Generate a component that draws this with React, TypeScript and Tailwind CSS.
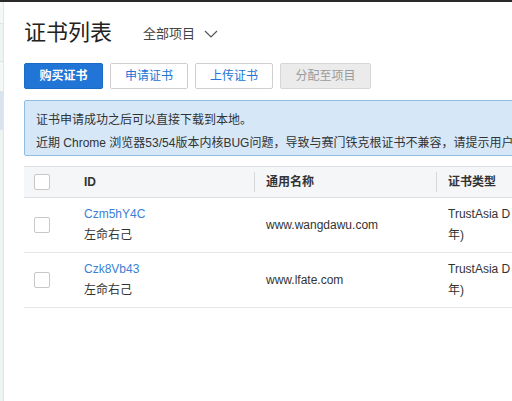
const rows = [
  { id: "Czm5hY4C", owner: "左命右己", domain: "www.wangdawu.com", type: "TrustAsia DV SSL CA - G5（1年)" },
  { id: "Czk8Vb43", owner: "左命右己", domain: "www.lfate.com", type: "TrustAsia DV SSL CA - G5（1年)" },
];

const Checkbox = () => (
  <div className="h-[16px] w-[16px] rounded-[2px] border border-[#c8c8c8] bg-white" />
);

const App = () => {
  return (
    <div
      className="relative h-[401px] w-[512px] overflow-hidden bg-white text-[12px] text-[#333]"
      style={{ fontFamily: '"Liberation Sans", "Noto Sans CJK SC", sans-serif' }}
    >
      <div className="h-[2px] w-full bg-[#2a2a2a]" />
      <div className="flex h-[399px]">
        <div className="flex w-[4px] shrink-0 flex-col border-r border-[#dfe6e6] bg-[#eef4f4]">
          <div className="h-[22px] border-b border-[#dde4e4] bg-[#f4f8f8]" />
          <div className="h-[38px] border-b border-[#dde4e4]" />
          <div className="h-[30px] border-b border-[#dde4e4] bg-[#f4f8f8]" />
          <div className="h-[38px] bg-[#d9e4ef]" />
          <div className="flex-1" />
        </div>
        <div className="min-w-0 flex-1 pl-[20px]">
          <div className="flex h-[61px] items-center">
            <h1 className="text-[22px] leading-none text-[#222]">证书列表</h1>
            <div className="ml-[31px] mt-[2px] flex items-center text-[13px] text-[#444]">
              全部项目
              <svg className="ml-[9px]" width="14" height="8" viewBox="0 0 14 8" fill="none">
                <path d="M1 1l6 6 6-6" stroke="#555" strokeWidth="1.2" />
              </svg>
            </div>
          </div>
          <div className="flex gap-[7px]">
            <button className="h-[26px] w-[79px] rounded-[2px] border border-[#1b6bc9] bg-[#2075d6] text-[12px] font-bold text-white">
              购买证书
            </button>
            <button className="h-[26px] w-[78px] rounded-[2px] border border-[#cfcfcf] bg-white text-[12px] text-[#2075d6]">
              申请证书
            </button>
            <button className="h-[26px] w-[78px] rounded-[2px] border border-[#cfcfcf] bg-white text-[12px] text-[#2075d6]">
              上传证书
            </button>
            <button className="h-[26px] w-[91px] rounded-[2px] border border-[#d6d6d6] bg-[#ebebeb] text-[12px] text-[#9a9a9a]">
              分配至项目
            </button>
          </div>
          <div className="mt-[11px] h-[56px] w-[600px] rounded-l-[2px] border border-[#8fbde8] bg-[#d6e8f8] px-[11px] pt-[8px] leading-[23px] text-[#333]">
            <p>证书申请成功之后可以直接下载到本地。</p>
            <p className="whitespace-nowrap">
              近期 Chrome 浏览器53/54版本内核BUG问题，导致与赛门铁克根证书不兼容，请提示用户升级浏览器。
            </p>
          </div>
          <div className="mt-[10px] w-[600px]">
            <div className="flex h-[32px] items-center border-y border-[#dcdfe3] bg-[#f5f6f7] font-bold text-[#333]">
              <div className="w-[46px] pl-[10px]">
                <Checkbox />
              </div>
              <div className="flex w-[185px] items-center justify-between pl-[14px]">
                ID
                <div className="h-[20px] w-px bg-[#d8d8d8]" />
              </div>
              <div className="flex w-[182px] items-center justify-between pl-[11px]">
                通用名称
                <div className="h-[20px] w-px bg-[#d8d8d8]" />
              </div>
              <div className="pl-[11px]">证书类型</div>
            </div>
            {rows.map((r) => (
              <div key={r.id} className="flex h-[55px] items-center border-b border-[#e3e6ea]">
                <div className="w-[46px] pl-[10px]">
                  <Checkbox />
                </div>
                <div className="w-[185px] pl-[14px] leading-[21px]">
                  <div className="text-[#3b7fd8]">{r.id}</div>
                  <div>{r.owner}</div>
                </div>
                <div className="w-[182px] pl-[11px]">{r.domain}</div>
                <div className="w-[75px] pl-[11px] leading-[21px]">
                  <div className="whitespace-nowrap">TrustAsia D</div>
                  <div>年)</div>
                </div>
              </div>
            ))}
          </div>
        </div>
      </div>
    </div>
  );
};

export default App;
